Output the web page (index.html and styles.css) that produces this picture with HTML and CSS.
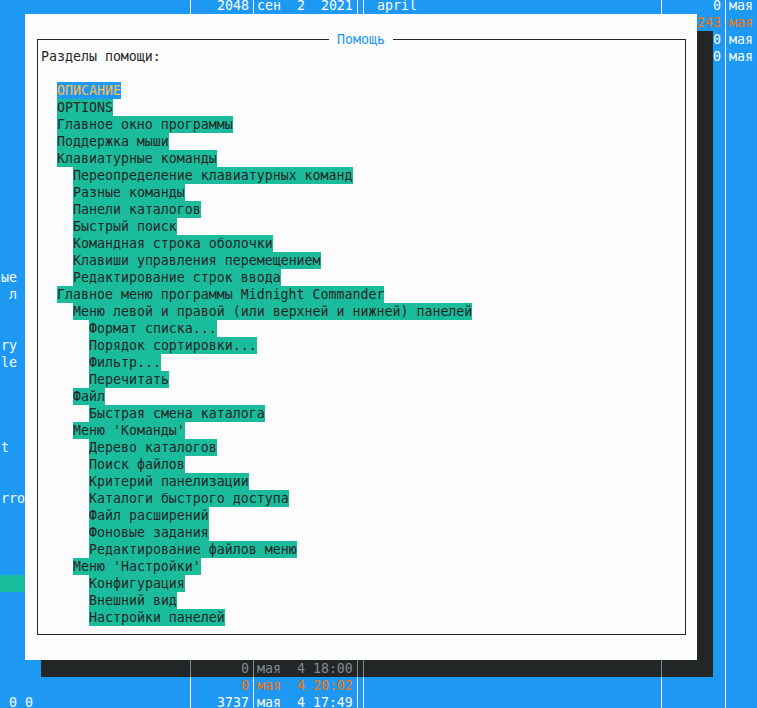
FILE: index.html
```html
<!DOCTYPE html>
<html lang="ru">
<head>
<meta charset="utf-8">
<title>Midnight Commander — Помощь</title>
<link rel="stylesheet" href="styles.css">
</head>
<body>
<div class="screen">
  <div class="row"><span></span><i class="v a"></i><span class="s">2048</span><i class="v"></i><span>сен  2  2021</span><i class="v"></i><i class="v b"></i><span> april</span><i class="v"></i><span class="s">0</span><i class="v"></i><span>мая</span></div>
  <div class="row"><span></span><i class="v a"></i><span class="s"></span><i class="v"></i><span></span><i class="v"></i><i class="v b"></i><span></span><i class="v"></i><span class="s o">243</span><i class="v"></i><span class="o">мая</span></div>
  <div class="row"><span></span><i class="v a"></i><span class="s"></span><i class="v"></i><span></span><i class="v"></i><i class="v b"></i><span></span><i class="v"></i><span class="s">0</span><i class="v"></i><span>мая</span></div>
  <div class="row"><span></span><i class="v a"></i><span class="s"></span><i class="v"></i><span></span><i class="v"></i><i class="v b"></i><span></span><i class="v"></i><span class="s">0</span><i class="v"></i><span>мая</span></div>
  <div class="row"><span></span><i class="v a"></i><span class="s"></span><i class="v"></i><span></span><i class="v"></i><i class="v b"></i><span></span><i class="v"></i><span class="s"></span><i class="v"></i><span></span></div>
  <div class="row"><span></span><i class="v a"></i><span class="s"></span><i class="v"></i><span></span><i class="v"></i><i class="v b"></i><span></span><i class="v"></i><span class="s"></span><i class="v"></i><span></span></div>
  <div class="row"><span></span><i class="v a"></i><span class="s"></span><i class="v"></i><span></span><i class="v"></i><i class="v b"></i><span></span><i class="v"></i><span class="s"></span><i class="v"></i><span></span></div>
  <div class="row"><span></span><i class="v a"></i><span class="s"></span><i class="v"></i><span></span><i class="v"></i><i class="v b"></i><span></span><i class="v"></i><span class="s"></span><i class="v"></i><span></span></div>
  <div class="row"><span></span><i class="v a"></i><span class="s"></span><i class="v"></i><span></span><i class="v"></i><i class="v b"></i><span></span><i class="v"></i><span class="s"></span><i class="v"></i><span></span></div>
  <div class="row"><span></span><i class="v a"></i><span class="s"></span><i class="v"></i><span></span><i class="v"></i><i class="v b"></i><span></span><i class="v"></i><span class="s"></span><i class="v"></i><span></span></div>
  <div class="row"><span></span><i class="v a"></i><span class="s"></span><i class="v"></i><span></span><i class="v"></i><i class="v b"></i><span></span><i class="v"></i><span class="s"></span><i class="v"></i><span></span></div>
  <div class="row"><span></span><i class="v a"></i><span class="s"></span><i class="v"></i><span></span><i class="v"></i><i class="v b"></i><span></span><i class="v"></i><span class="s"></span><i class="v"></i><span></span></div>
  <div class="row"><span></span><i class="v a"></i><span class="s"></span><i class="v"></i><span></span><i class="v"></i><i class="v b"></i><span></span><i class="v"></i><span class="s"></span><i class="v"></i><span></span></div>
  <div class="row"><span></span><i class="v a"></i><span class="s"></span><i class="v"></i><span></span><i class="v"></i><i class="v b"></i><span></span><i class="v"></i><span class="s"></span><i class="v"></i><span></span></div>
  <div class="row"><span></span><i class="v a"></i><span class="s"></span><i class="v"></i><span></span><i class="v"></i><i class="v b"></i><span></span><i class="v"></i><span class="s"></span><i class="v"></i><span></span></div>
  <div class="row"><span></span><i class="v a"></i><span class="s"></span><i class="v"></i><span></span><i class="v"></i><i class="v b"></i><span></span><i class="v"></i><span class="s"></span><i class="v"></i><span></span></div>
  <div class="row"><span> ые</span><i class="v a"></i><span class="s"></span><i class="v"></i><span></span><i class="v"></i><i class="v b"></i><span></span><i class="v"></i><span class="s"></span><i class="v"></i><span></span></div>
  <div class="row"><span>  л</span><i class="v a"></i><span class="s"></span><i class="v"></i><span></span><i class="v"></i><i class="v b"></i><span></span><i class="v"></i><span class="s"></span><i class="v"></i><span></span></div>
  <div class="row"><span></span><i class="v a"></i><span class="s"></span><i class="v"></i><span></span><i class="v"></i><i class="v b"></i><span></span><i class="v"></i><span class="s"></span><i class="v"></i><span></span></div>
  <div class="row"><span></span><i class="v a"></i><span class="s"></span><i class="v"></i><span></span><i class="v"></i><i class="v b"></i><span></span><i class="v"></i><span class="s"></span><i class="v"></i><span></span></div>
  <div class="row"><span> ry</span><i class="v a"></i><span class="s"></span><i class="v"></i><span></span><i class="v"></i><i class="v b"></i><span></span><i class="v"></i><span class="s"></span><i class="v"></i><span></span></div>
  <div class="row"><span> le</span><i class="v a"></i><span class="s"></span><i class="v"></i><span></span><i class="v"></i><i class="v b"></i><span></span><i class="v"></i><span class="s"></span><i class="v"></i><span></span></div>
  <div class="row"><span></span><i class="v a"></i><span class="s"></span><i class="v"></i><span></span><i class="v"></i><i class="v b"></i><span></span><i class="v"></i><span class="s"></span><i class="v"></i><span></span></div>
  <div class="row"><span></span><i class="v a"></i><span class="s"></span><i class="v"></i><span></span><i class="v"></i><i class="v b"></i><span></span><i class="v"></i><span class="s"></span><i class="v"></i><span></span></div>
  <div class="row"><span></span><i class="v a"></i><span class="s"></span><i class="v"></i><span></span><i class="v"></i><i class="v b"></i><span></span><i class="v"></i><span class="s"></span><i class="v"></i><span></span></div>
  <div class="row"><span></span><i class="v a"></i><span class="s"></span><i class="v"></i><span></span><i class="v"></i><i class="v b"></i><span></span><i class="v"></i><span class="s"></span><i class="v"></i><span></span></div>
  <div class="row"><span> t</span><i class="v a"></i><span class="s"></span><i class="v"></i><span></span><i class="v"></i><i class="v b"></i><span></span><i class="v"></i><span class="s"></span><i class="v"></i><span></span></div>
  <div class="row"><span></span><i class="v a"></i><span class="s"></span><i class="v"></i><span></span><i class="v"></i><i class="v b"></i><span></span><i class="v"></i><span class="s"></span><i class="v"></i><span></span></div>
  <div class="row"><span></span><i class="v a"></i><span class="s"></span><i class="v"></i><span></span><i class="v"></i><i class="v b"></i><span></span><i class="v"></i><span class="s"></span><i class="v"></i><span></span></div>
  <div class="row"><span> rro</span><i class="v a"></i><span class="s"></span><i class="v"></i><span></span><i class="v"></i><i class="v b"></i><span></span><i class="v"></i><span class="s"></span><i class="v"></i><span></span></div>
  <div class="row"><span></span><i class="v a"></i><span class="s"></span><i class="v"></i><span></span><i class="v"></i><i class="v b"></i><span></span><i class="v"></i><span class="s"></span><i class="v"></i><span></span></div>
  <div class="row"><span></span><i class="v a"></i><span class="s"></span><i class="v"></i><span></span><i class="v"></i><i class="v b"></i><span></span><i class="v"></i><span class="s"></span><i class="v"></i><span></span></div>
  <div class="row"><span></span><i class="v a"></i><span class="s"></span><i class="v"></i><span></span><i class="v"></i><i class="v b"></i><span></span><i class="v"></i><span class="s"></span><i class="v"></i><span></span></div>
  <div class="row"><span></span><i class="v a"></i><span class="s"></span><i class="v"></i><span></span><i class="v"></i><i class="v b"></i><span></span><i class="v"></i><span class="s"></span><i class="v"></i><span></span></div>
  <div class="row"><span class="cursor"></span><i class="v a"></i><span class="s"></span><i class="v"></i><span></span><i class="v"></i><i class="v b"></i><span></span><i class="v"></i><span class="s"></span><i class="v"></i><span></span></div>
  <div class="row"><span></span><i class="v a"></i><span class="s"></span><i class="v"></i><span></span><i class="v"></i><i class="v b"></i><span></span><i class="v"></i><span class="s"></span><i class="v"></i><span></span></div>
  <div class="row"><span></span><i class="v a"></i><span class="s"></span><i class="v"></i><span></span><i class="v"></i><i class="v b"></i><span></span><i class="v"></i><span class="s"></span><i class="v"></i><span></span></div>
  <div class="row"><span></span><i class="v a"></i><span class="s"></span><i class="v"></i><span></span><i class="v"></i><i class="v b"></i><span></span><i class="v"></i><span class="s"></span><i class="v"></i><span></span></div>
  <div class="row"><span></span><i class="v a"></i><span class="s"></span><i class="v"></i><span></span><i class="v"></i><i class="v b"></i><span></span><i class="v"></i><span class="s"></span><i class="v"></i><span></span></div>
  <div class="row shade"><span class="n"></span><i class="v a d"></i><span class="s d">0</span><i class="v d"></i><span class="d">мая  4 18:00</span><i class="v d"></i><i class="v b d"></i><span class="d"></span><i class="v d"></i><span class="s s2"></span><i class="v w"></i><span></span></div>
  <div class="row"><span></span><i class="v a"></i><span class="s o">0</span><i class="v"></i><span class="o">мая  4 20:02</span><i class="v"></i><i class="v b"></i><span></span><i class="v"></i><span class="s"></span><i class="v"></i><span></span></div>
  <div class="row"><span>  0 0</span><i class="v a"></i><span class="s">3737</span><i class="v"></i><span>мая  4 17:49</span><i class="v"></i><i class="v b"></i><span></span><i class="v"></i><span class="s"></span><i class="v"></i><span></span></div>

  <div class="dialog">
    <div class="frame">
      <span class="title"> Помощь </span>
      <div class="line">Разделы помощи:</div>
      <div class="line"></div>
      <div class="line"><span class="item i1 sel">ОПИСАНИЕ</span></div>
      <div class="line"><span class="item i1">OPTIONS</span></div>
      <div class="line"><span class="item i1">Главное окно программы</span></div>
      <div class="line"><span class="item i1">Поддержка мыши</span></div>
      <div class="line"><span class="item i1">Клавиатурные команды</span></div>
      <div class="line"><span class="item i2">Переопределение клавиатурных команд</span></div>
      <div class="line"><span class="item i2">Разные команды</span></div>
      <div class="line"><span class="item i2">Панели каталогов</span></div>
      <div class="line"><span class="item i2">Быстрый поиск</span></div>
      <div class="line"><span class="item i2">Командная строка оболочки</span></div>
      <div class="line"><span class="item i2">Клавиши управления перемещением</span></div>
      <div class="line"><span class="item i2">Редактирование строк ввода</span></div>
      <div class="line"><span class="item i1">Главное меню программы Midnight Commander</span></div>
      <div class="line"><span class="item i2">Меню левой и правой (или верхней и нижней) панелей</span></div>
      <div class="line"><span class="item i3">Формат списка...</span></div>
      <div class="line"><span class="item i3">Порядок сортировки...</span></div>
      <div class="line"><span class="item i3">Фильтр...</span></div>
      <div class="line"><span class="item i3">Перечитать</span></div>
      <div class="line"><span class="item i2">Файл</span></div>
      <div class="line"><span class="item i3">Быстрая смена каталога</span></div>
      <div class="line"><span class="item i2">Меню 'Команды'</span></div>
      <div class="line"><span class="item i3">Дерево каталогов</span></div>
      <div class="line"><span class="item i3">Поиск файлов</span></div>
      <div class="line"><span class="item i3">Критерий панелизации</span></div>
      <div class="line"><span class="item i3">Каталоги быстрого доступа</span></div>
      <div class="line"><span class="item i3">Файл расширений</span></div>
      <div class="line"><span class="item i3">Фоновые задания</span></div>
      <div class="line"><span class="item i3">Редактирование файлов меню</span></div>
      <div class="line"><span class="item i2">Меню 'Настройки'</span></div>
      <div class="line"><span class="item i3">Конфигурация</span></div>
      <div class="line"><span class="item i3">Внешний вид</span></div>
      <div class="line"><span class="item i3">Настройки панелей</span></div>
    </div>
  </div>
</div>
</body>
</html>
```

FILE: styles.css
```css
html, body {
  margin: 0;
  height: 100%;
  overflow: hidden;
}

body {
  background: #1d99f3;
  color: #fcfcfc;
  font-family: "DejaVu Sans Mono", "Liberation Mono", monospace;
  font-size: 13.288px;
}

.screen {
  position: relative;
  width: 834px;
  margin: -3px 0 0 -7px;
}

.row {
  display: grid;
  grid-template-columns: 192px 8px 56px 8px 96px 8px 8px 288px 8px 56px 8px 96px;
  height: 17px;
  line-height: 18px;
  white-space: pre;
}

.row > span {
  overflow: hidden;
}

.s {
  text-align: right;
}

.v {
  display: block;
  background-image: linear-gradient(90deg, transparent 4px, currentColor 4px, currentColor 5px, transparent 5px);
}

.v.a {
  background-image: linear-gradient(90deg, transparent 5px, currentColor 5px, currentColor 6px, transparent 6px);
}

.v.b {
  background-image: linear-gradient(90deg, transparent 2px, currentColor 2px, currentColor 3px, transparent 3px);
}

.o {
  color: #f67400;
}

.cursor {
  background: #1abc9c;
}

.shade {
  color: #7f8c8d;
}

.shade > .d {
  background-color: #232627;
}

.shade > .n {
  background: linear-gradient(90deg, transparent 48px, #232627 48px);
}

.shade > .s2 {
  background: linear-gradient(90deg, #232627 32px, transparent 32px);
}

.shade > .w {
  color: #fcfcfc;
}

.dialog {
  position: absolute;
  left: 32px;
  top: 17px;
  width: 672px;
  height: 646px;
  box-sizing: border-box;
  padding: 25px 11px 0 12px;
  background: #fcfcfc;
  color: #232627;
}

.dialog::after {
  content: "";
  position: absolute;
  left: 100%;
  top: 17px;
  width: 16px;
  height: 646px;
  background: #232627;
}

.frame {
  position: relative;
  height: 596px;
  box-sizing: border-box;
  border: 1px solid #232627;
  padding: 8px 0 0 3px;
}

.title {
  position: absolute;
  left: 291px;
  top: -9px;
  height: 17px;
  line-height: 18px;
  white-space: pre;
  background: #fcfcfc;
  color: #1d99f3;
}

.line {
  height: 17px;
  line-height: 18px;
  white-space: pre;
}

.item {
  display: inline-block;
  height: 17px;
  vertical-align: top;
  background: #1abc9c;
}

.i1 { margin-left: 16px; }
.i2 { margin-left: 32px; }
.i3 { margin-left: 48px; }

.item.sel {
  background: #1d99f3;
  color: #fdbc4b;
}
```
